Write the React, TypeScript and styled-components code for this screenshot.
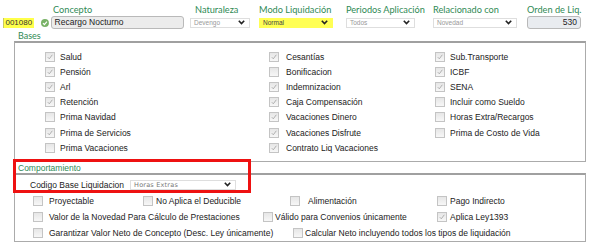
import styled, { createGlobalStyle } from "styled-components";

const GlobalStyle = createGlobalStyle`
  body {
    margin: 0;
    background: #fff;
    font-family: "Liberation Sans", Arial, sans-serif;
    color: #222;
  }
`;

const Page = styled.div`
  position: relative;
  width: 589px;
  height: 247px;
  overflow: hidden;
`;

const Header = styled.div`
  display: flex;
  align-items: flex-start;
  padding: 5px 0 0 3px;
`;

const Field = styled.div<{ $w: number; $ml?: number }>`
  width: ${p => p.$w}px;
  margin-left: ${p => p.$ml || 0}px;
  display: flex;
  flex-direction: column;
`;

const Label = styled.div<{ $pl?: number }>`
  font-family: Lato, "Liberation Sans", sans-serif;
  font-size: 9.2px;
  line-height: 10px;
  height: 10px;
  color: #2f8a55;
  white-space: nowrap;
  padding-left: ${p => p.$pl || 0}px;
`;

const Controls = styled.div`
  display: flex;
  align-items: center;
  height: 13px;
  margin-top: 1px;
`;

const CodeBox = styled.div`
  width: 30px;
  height: 10px;
  background: #ffff4a;
  border-left: 1px solid #c9c960;
  font-size: 8px;
  line-height: 10px;
  text-align: center;
  color: #333;
`;

const OkIcon = styled.svg`
  width: 8px;
  height: 8px;
  margin-left: 7px;
`;

const TextInput = styled.div<{ $w: number; $ml?: number; $right?: boolean; $bg?: string }>`
  box-sizing: border-box;
  width: ${p => p.$w}px;
  margin-left: ${p => p.$ml || 0}px;
  height: 13px;
  border: 1px solid #b9b9b9;
  border-radius: 3px;
  background: ${p => p.$bg || "#ececec"};
  font-size: 8.5px;
  line-height: 11px;
  padding: 0 3px;
  text-align: ${p => (p.$right ? "right" : "left")};
  color: #222;
`;

const Select = styled.div<{ $w: number; $yellow?: boolean }>`
  box-sizing: border-box;
  width: ${p => p.$w}px;
  height: 10px;
  display: flex;
  align-items: center;
  justify-content: space-between;
  padding: 0 4px 0 3px;
  border: 1px solid ${p => (p.$yellow ? "#ffff55" : "#dedede")};
  background: ${p => (p.$yellow ? "#ffff55" : "#fff")};
  font-size: 6.5px;
  color: ${p => (p.$yellow ? "#444" : "#999")};
`;

const CodeSelect = styled(Select)`
  font-family: "DejaVu Sans", sans-serif;
  font-size: 6.5px;
  color: #777;
  letter-spacing: 0.2px;
`;

const Chevron = () => (
  <svg width="7" height="5" viewBox="0 0 7 5">
    <polyline points="0.8,0.8 3.5,3.6 6.2,0.8" fill="none" stroke="#222" strokeWidth="1.6" />
  </svg>
);

const SectionLabel = styled.div`
  font-family: Lato, "Liberation Sans", sans-serif;
  font-size: 9px;
  line-height: 10px;
  height: 10px;
  color: #2f8a55;
  padding-left: 18px;
  margin-top: 2px;
`;

const Box = styled.div<{ $h: number }>`
  box-sizing: border-box;
  margin: 0 3px 0 14px;
  height: ${p => p.$h}px;
  border: 1px solid #ababab;
  border-top: 2px solid #a0a0a0;
`;

const BasesGrid = styled.div`
  display: grid;
  grid-template-columns: 224px 166px 1fr;
  grid-auto-flow: column;
  grid-template-rows: repeat(7, 15.2px);
  padding: 6px 0 0 30px;
`;

const Option = styled.label<{ $w?: number; $gap?: number }>`
  display: flex;
  align-items: center;
  gap: ${p => p.$gap ?? 5}px;
  width: ${p => (p.$w ? `${p.$w}px` : "auto")};
  font-size: 8.5px;
  white-space: nowrap;
  color: #222;
`;

const Check = styled.span`
  box-sizing: border-box;
  flex: none;
  width: 10px;
  height: 10px;
  border: 1px solid #c4c4c4;
  background: linear-gradient(#e6e6e6, #f7f7f7);
  display: flex;
  align-items: center;
  justify-content: center;
`;

const Legend = styled.div`
  font-size: 8.5px;
  line-height: 10px;
  color: #2f8a55;
  padding: 1px 0 0 18px;
  height: 10px;
`;

const BaseRow = styled.div`
  box-sizing: border-box;
  display: flex;
  align-items: center;
  height: 18px;
  padding: 1px 0 0 15px;
  font-size: 8.5px;
  gap: 6px;
`;

const Row = styled.div<{ $pl?: number }>`
  display: flex;
  align-items: center;
  height: 16px;
  padding-left: ${p => p.$pl ?? 18}px;
`;

const Highlight = styled.div`
  position: absolute;
  left: 13px;
  top: 159px;
  width: 238px;
  height: 34px;
  box-sizing: border-box;
  border: 3px solid #ee1111;
`;

function Box2Check({ checked }: { checked?: boolean }) {
  return (
    <Check>
      {checked && (
        <svg width="6" height="6" viewBox="0 0 6 6">
          <polyline points="0.8,3.2 2.3,4.8 5.3,0.8" fill="none" stroke="#a8a8a8" strokeWidth="0.9" />
        </svg>
      )}
    </Check>
  );
}

const bases: [string, boolean][] = [
  ["Salud", true],
  ["Pensión", true],
  ["Arl", true],
  ["Retención", true],
  ["Prima Navidad", false],
  ["Prima de Servicios", true],
  ["Prima Vacaciones", false],
  ["Cesantías", true],
  ["Bonificacion", false],
  ["Indemnizacion", true],
  ["Caja Compensación", true],
  ["Vacaciones Dinero", true],
  ["Vacaciones Disfrute", true],
  ["Contrato Liq Vacaciones", true],
  ["Sub.Transporte", true],
  ["ICBF", true],
  ["SENA", true],
  ["Incluir como Sueldo", false],
  ["Horas Extra/Recargos", false],
  ["Prima de Costo de Vida", false],
];

export default function App() {
  return (
    <Page>
      <GlobalStyle />
      <Header>
        <Field $w={181}>
          <Label $pl={50}>Concepto</Label>
          <Controls>
            <CodeBox>001080</CodeBox>
            <OkIcon viewBox="0 0 8 8">
              <circle cx="4" cy="4" r="4" fill="#79b267" />
              <polyline points="2,4.2 3.4,5.6 6,2.6" fill="none" stroke="#fff" strokeWidth="1.2" />
            </OkIcon>
            <TextInput $w={135} $ml={2}>Recargo Nocturno</TextInput>
          </Controls>
        </Field>
        <Field $w={60} $ml={6}>
          <Label $pl={5}>Naturaleza</Label>
          <Controls>
            <Select $w={60}>Devengo<Chevron /></Select>
          </Controls>
        </Field>
        <Field $w={74} $ml={9}>
          <Label>Modo Liquidación</Label>
          <Controls>
            <Select $w={74} $yellow>Normal<Chevron /></Select>
          </Controls>
        </Field>
        <Field $w={69} $ml={13}>
          <Label>Periodos Aplicación</Label>
          <Controls>
            <Select $w={69}>Todos<Chevron /></Select>
          </Controls>
        </Field>
        <Field $w={84} $ml={18}>
          <Label>Relacionado con</Label>
          <Controls>
            <Select $w={84}>Novedad<Chevron /></Select>
          </Controls>
        </Field>
        <Field $w={54} $ml={10}>
          <Label>Orden de Liq.</Label>
          <Controls>
            <TextInput $w={54} $right $bg="#e9ecf0">530</TextInput>
          </Controls>
        </Field>
      </Header>

      <SectionLabel>Bases</SectionLabel>
      <Box $h={121}>
        <BasesGrid>
          {bases.map(([name, on], i) => (
            <Option key={name} $gap={i >= 7 && i < 14 ? 7 : 5}>
              <Box2Check checked={on} />
              {name}
            </Option>
          ))}
        </BasesGrid>
      </Box>

      <Legend>Comportamiento</Legend>
      <Box $h={69}>
        <BaseRow>
          Codigo Base Liquidacion
          <CodeSelect $w={106}>Horas Extras<Chevron /></CodeSelect>
        </BaseRow>
        <Row>
          <Option $w={110} $gap={6}><Box2Check />Proyectable</Option>
          <Option $w={147} $gap={3}><Box2Check />No Aplica el Deducible</Option>
          <Option $w={147} $gap={8}><Box2Check />Alimentación</Option>
          <Option $gap={3}><Box2Check />Pago Indirecto</Option>
        </Row>
        <Row>
          <Option $w={230} $gap={6}><Box2Check />Valor de la Novedad Para Cálculo de Prestaciones</Option>
          <Option $w={174} $gap={2}><Box2Check />Válido para Convenios únicamente</Option>
          <Option $gap={3}><Box2Check checked />Aplica Ley1393</Option>
        </Row>
        <Row>
          <Option $w={260} $gap={6}><Box2Check />Garantizar Valor Neto de Concepto (Desc. Ley únicamente)</Option>
          <Option $gap={2}><Box2Check />Calcular Neto incluyendo todos los tipos de liquidación</Option>
        </Row>
      </Box>
      <Highlight />
    </Page>
  );
}
